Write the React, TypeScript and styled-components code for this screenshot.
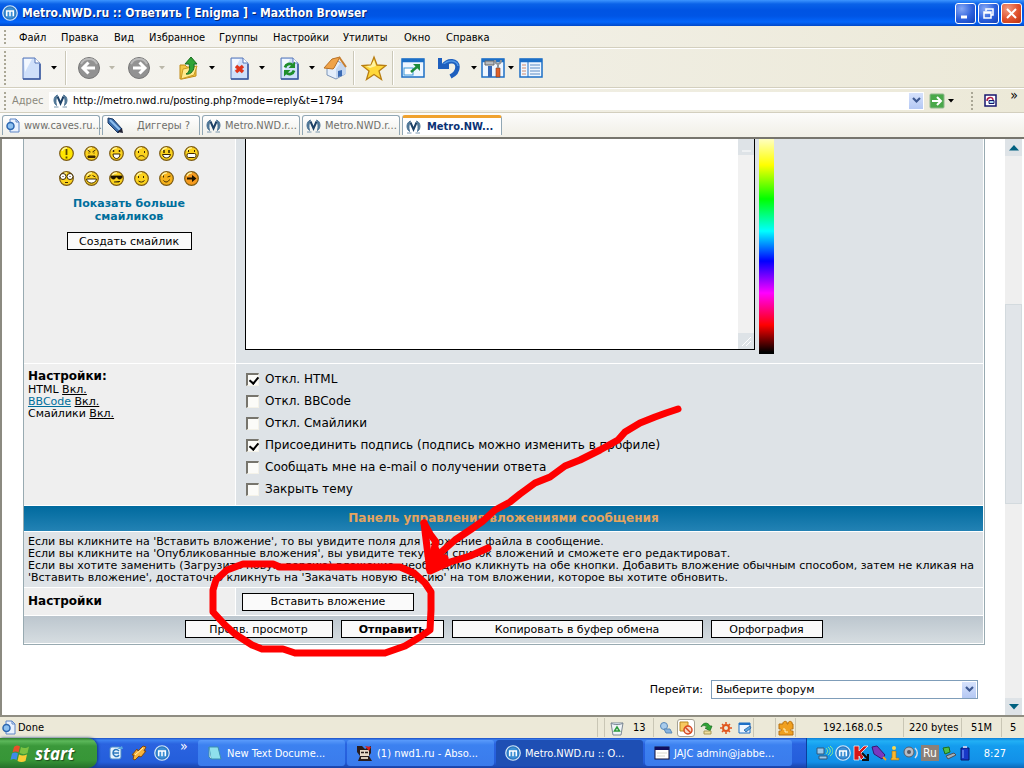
import React from "react";
import styled, { createGlobalStyle, css } from "styled-components";

const ui = `"DejaVu Sans Condensed", "DejaVu Sans", sans-serif`;
const page = `"DejaVu Sans", sans-serif`;

const Global = createGlobalStyle`
  * { box-sizing: border-box; }
  body { margin: 0; background: #fff; color: #000; font-family: ${ui}; font-size: 11px; }
  button, input, select, textarea { font: inherit; color: inherit; margin: 0; padding: 0; border: 0; background: none; }
  svg { display: block; flex: none; }
`;

const Screen = styled.div`
  display: flex;
  flex-direction: column;
  height: 100vh;
  overflow: hidden;
`;

/* ---------- window chrome ---------- */
const TitleBar = styled.header`
  display: flex;
  align-items: center;
  gap: 4px;
  height: 26px;
  padding: 0 2px;
  flex: none;
  background: linear-gradient(#3d95ff 0, #0a62e8 4px, #0054e3 10px, #0055e5 16px, #0466fb 22px, #0148c8 26px);
`;
const Title = styled.h1`
  margin: 0;
  flex: 1;
  font: bold 12px ${ui};
  color: #fff;
  text-shadow: 1px 1px #0a246a;
  white-space: nowrap;
`;
const WindowButton = styled.button<{ $close?: boolean }>`
  display: grid;
  place-items: center;
  width: 21px;
  height: 21px;
  margin-left: -2px;
  border: 1px solid #fff;
  border-radius: 3px;
  background: ${(p) =>
    p.$close
      ? "radial-gradient(circle at 30% 25%, #f09a80, #e0512c 55%, #b83210)"
      : "radial-gradient(circle at 30% 25%, #86a8f5, #2c60dc 55%, #1241b8)"};
`;
const MenuBar = styled.nav`
  display: flex;
  align-items: center;
  height: 22px;
  flex: none;
  padding-left: 4px;
  background: linear-gradient(90deg, #f7f6f3, #ece9d8);
  border-bottom: 1px solid #d3cfbe;
`;
const MenuItems = styled.div`
  display: flex;
  padding: 2px 0 0 13px;
`;
const MenuItem = styled.button<{ $w: number }>`
  width: ${(p) => p.$w}px;
  text-align: left;
  white-space: nowrap;
`;
const Grip = styled.span<{ $h: number }>`
  flex: none;
  width: 2px;
  height: ${(p) => p.$h}px;
  background: repeating-linear-gradient(#aaa796 0 2px, transparent 2px 4px);
`;
const ToolBar = styled.div`
  display: flex;
  align-items: center;
  height: 40px;
  flex: none;
  padding-left: 4px;
  border-top: 1px solid #fff;
  border-bottom: 1px solid #d3cfbe;
  background: linear-gradient(90deg, #f5f4f0, #ece9d8);
`;
const Tools0 = styled.div`
  display: flex;
  align-items: center;
  padding-left: 8px;
`;
const ToolButton = styled.button<{ $w?: number }>`
  display: grid;
  place-items: center;
  flex: none;
  width: ${(p) => p.$w ?? 34}px;
  height: 34px;
`;
const DropButton = styled.button<{ $w: number; $off?: boolean }>`
  display: flex;
  align-items: center;
  flex: none;
  width: ${(p) => p.$w}px;
  height: 34px;
  padding-left: 3px;
  color: ${(p) => (p.$off ? "#bbb8aa" : "#000")};
`;
const Rule = styled.span<{ $w: number }>`
  flex: none;
  width: ${(p) => p.$w}px;
  height: 34px;
  background: linear-gradient(90deg, transparent 1px, #cbc8b8 1px 2px, #fff 2px 3px, transparent 3px);
`;
const AddressBar = styled.div`
  display: flex;
  align-items: center;
  height: 25px;
  flex: none;
  padding: 0 3px 0 4px;
  border-top: 1px solid #fff;
  border-bottom: 1px solid #d3cfbe;
  background: linear-gradient(90deg, #f5f4f0, #ece9d8);
`;
const AddressLabel = styled.label`
  width: 43px;
  padding-left: 6px;
  color: #8a887c;
`;
const AddressField = styled.div`
  display: flex;
  align-items: center;
  flex: 1;
  height: 18px;
  margin-right: 5px;
  padding: 0 1px 0 4px;
  gap: 5px;
  background: #fff;
`;
const AddressInput = styled.input`
  flex: 1;
  min-width: 0;
  outline: 0;
`;
const Chevron = styled.button`
  display: grid;
  place-items: center;
  flex: none;
  width: 14px;
  height: 16px;
  background: linear-gradient(#d6e2fc, #b4c8f4);
`;
const Chevrons = styled.button`
  align-self: flex-start;
  width: 14px;
  font-size: 14px;
  line-height: 12px;
`;
const TabStrip = styled.div`
  display: flex;
  align-items: flex-end;
  gap: 2px;
  height: 26px;
  flex: none;
  padding: 0 2px 2px;
  background: linear-gradient(#fcfcfb, #f1efe6);
  border-bottom: 2px solid #77756d;
`;
const Tab = styled.button<{ $on?: boolean }>`
  display: flex;
  align-items: center;
  gap: 4px;
  width: 98px;
  height: 20px;
  padding: 0 0 0 3px;
  color: #6f6f6b;
  white-space: nowrap;
  border: 1px solid #91a7b4;
  border-bottom: 0;
  border-radius: 3px 3px 0 0;
  background: linear-gradient(#fff, #f0f0ea);
  ${(p) =>
    p.$on &&
    css`
      width: 100px;
      color: #0b3275;
      font-weight: bold;
      background: #fff;
      border-top: 3px solid #f0a22e;
      gap: 6px;
    `}
`;
const TabLabel = styled.span<{ $center?: boolean }>`
  flex: ${(p) => (p.$center ? 1 : "none")};
  text-align: center;
`;

/* ---------- page ---------- */
const Viewport = styled.main`
  position: relative;
  display: flex;
  flex: 1;
  min-height: 0;
  overflow: hidden;
  border-left: 2px solid #8b8a80;
  background: #fff;
`;
const Body = styled.div`
  flex: 1;
  min-width: 0;
  padding: 0 20px 0 21px;
  font-family: ${page};
`;
const Form = styled.form`
  display: grid;
  grid-template-columns: 211px 1fr;
  gap: 1px;
  border: solid #98aab1;
  border-width: 0 1px 1px;
  padding-bottom: 1px;
  padding-right: 1px;
`;
const LabelCell = styled.section`
  background: #efefef;
  padding: 4px;
`;
const FieldCell = styled.section`
  background: #dee3e7;
  padding: 0 8px 0 9px;
`;
const SmileyCell = styled(LabelCell)`
  display: flex;
  flex-direction: column;
  align-items: center;
  height: 224px;
  padding: 7px 5px 4px 4px;
`;
const SmileyGrid = styled.div`
  display: grid;
  grid-template-columns: repeat(6, 15px);
  gap: 10px;
  margin-bottom: 11px;
`;
const SmileyButton = styled.button`
  width: 15px;
  height: 15px;
`;
const MoreLink = styled.a`
  width: 130px;
  margin-bottom: 9px;
  font-size: 11px;
  font-weight: bold;
  line-height: 13px;
  text-align: center;
  text-decoration: none;
  color: #006e9c;
`;
const FormButton = styled.button<{ $w: number; $bold?: boolean }>`
  width: ${(p) => p.$w}px;
  height: 18px;
  border: 1px solid #000;
  background: #fafafa;
  font: ${(p) => (p.$bold ? "bold" : "normal")} 11px ${page};
  white-space: nowrap;
`;
const EditorCell = styled(FieldCell)`
  display: flex;
  align-items: flex-start;
  gap: 4px;
`;
const Editor = styled.div`
  display: flex;
  width: 510px;
  height: 211px;
  border: 1px solid #000;
  border-top: 0;
  background: #fff;
`;
const MessageBox = styled.textarea`
  flex: 1;
  resize: none;
  outline: 0;
  padding: 2px;
`;
const EditorScroll = styled.div`
  display: flex;
  flex-direction: column;
  justify-content: space-between;
  width: 16px;
  background: #f1f1f1;
`;
const ScrollStub = styled.span`
  display: grid;
  place-items: end;
  height: 16px;
  padding: 3px;
  background: #dee3e7;
`;
const ColourBar = styled.div`
  width: 15px;
  height: 215px;
  background: linear-gradient(#ffffc0, #ff0 26px, #0f0 60px, #0ff 92px, #00f 122px, #f0f 154px, #f00 186px, #000 213px);
`;
const SettingsCell = styled(LabelCell)`
  height: 141px;
  font-size: 11px;
  line-height: 12px;
`;
const Heading = styled.h2`
  margin: 0;
  font: bold 12px/16px ${page};
`;
const Line = styled.p`
  margin: 0;
`;
const Link = styled.a<{ $blue?: boolean }>`
  color: ${(p) => (p.$blue ? "#006e9c" : "#000")};
`;
const Options = styled(FieldCell)`
  display: flex;
  flex-direction: column;
  padding-top: 4px;
`;
const Option = styled.label`
  display: flex;
  align-items: center;
  gap: 6px;
  height: 22px;
  padding-left: 1px;
  font-size: 12px;
  white-space: nowrap;
`;
const Check = styled.input`
  appearance: none;
  flex: none;
  width: 13px;
  height: 13px;
  background: #fbfbf8;
  border: solid;
  border-width: 2px 1px 1px 2px;
  border-color: #77756d #f4f2e8 #f4f2e8 #77756d;
  &:checked::after {
    content: "";
    display: block;
    width: 4px;
    height: 7px;
    margin: 0 0 0 3px;
    border: solid #000;
    border-width: 0 2px 2px 0;
    transform: rotate(40deg);
  }
`;
const Banner = styled.h2`
  grid-column: 1 / -1;
  margin: 0;
  height: 25px;
  font: bold 12px/25px ${page};
  text-align: center;
  color: #e5a45e;
  background: linear-gradient(#006a9e, #2382b4);
`;
const Notes = styled.div`
  grid-column: 1 / -1;
  height: 55px;
  padding: 4px 4px 0;
  font-size: 11px;
  line-height: 12px;
  background: #dee3e7;
  white-space: nowrap;
`;
const RowLabel = styled(LabelCell)`
  height: 27px;
  padding: 5px 4px;
`;
const RowField = styled(FieldCell)`
  display: flex;
  align-items: center;
  padding-left: 6px;
`;
const Actions = styled.div`
  grid-column: 1 / -1;
  display: flex;
  justify-content: center;
  gap: 8px;
  height: 27px;
  padding-top: 4px;
  background: linear-gradient(#bcc6ce, #d6dde1);
`;
const Jump = styled.div`
  display: flex;
  align-items: center;
  justify-content: flex-end;
  gap: 8px;
  margin: 35px 7px 0 0;
  font-size: 11px;
`;
const SelectBox = styled.div`
  display: flex;
  align-items: center;
  width: 267px;
  height: 19px;
  padding: 1px;
  border: 1px solid #7f9db9;
  background: #fff;
`;
const Select = styled.select`
  appearance: none;
  flex: 1;
  padding-left: 3px;
  outline: 0;
`;
const PageScroll = styled.div`
  display: flex;
  flex-direction: column;
  width: 17px;
  margin-right: 2px;
  background: #efefef;
`;
const ScrollButton = styled.button`
  display: grid;
  place-items: center;
  height: 17px;
  flex: none;
  background: #dee3e7;
`;
const Thumb = styled.div`
  flex: 200;
  background: #e1e5e9;
  border: 1px solid #d3dade;
`;
const Gap = styled.span<{ $f: number }>`
  flex: ${(p) => p.$f};
`;
const Scribble = styled.svg`
  position: absolute;
  top: 0;
  left: -2px;
  pointer-events: none;
`;

/* ---------- status bar and task bar ---------- */
const StatusBar = styled.footer`
  display: flex;
  align-items: center;
  height: 23px;
  flex: none;
  padding-left: 2px;
  border-top: 2px solid #8f8d82;
  background: #ece9d8;
  white-space: nowrap;
`;
const StatusText = styled.span`
  flex: 1;
  padding-left: 2px;
`;
const Panel = styled.span<{ $w: number; $pad?: number }>`
  display: flex;
  align-items: center;
  gap: 4px;
  flex: none;
  width: ${(p) => p.$w}px;
  height: 19px;
  padding-left: ${(p) => p.$pad ?? 4}px;
  border-left: 1px solid #c9c6b5;
`;
const TrashPanel = styled(Panel)`
  gap: 8px;
`;
const StatusButton = styled.button<{ $on?: boolean }>`
  display: grid;
  place-items: center;
  width: 16px;
  height: 18px;
  ${(p) =>
    p.$on &&
    css`
      width: 18px;
      border: 1px solid #a5a294;
      border-radius: 3px;
      background: #fff;
    `}
`;
const TaskBar = styled.footer`
  display: flex;
  align-items: stretch;
  height: 30px;
  flex: none;
  color: #fff;
  background: linear-gradient(#1d4fc4 0, #3d83f2 2px, #2a63e0 6px, #245edb 24px, #1941a5 30px);
`;
const Start = styled.button`
  display: flex;
  align-items: center;
  gap: 5px;
  width: 97px;
  padding-left: 10px;
  font: italic bold 17px "Open Sans", sans-serif;
  text-shadow: 1px 1px 1px #1e4d1c;
  border-radius: 0 9px 9px 0;
  background: linear-gradient(#2d7d2d 0, #5cb85a 3px, #3a983a 8px, #379637 22px, #25702a 30px);
  box-shadow: 1px 0 3px #12357e;
`;
const QuickLaunch = styled.div`
  display: flex;
  align-items: center;
  gap: 7px;
  width: 101px;
  padding-left: 11px;
`;
const More = styled.button`
  align-self: flex-start;
  padding: 0 0 0 3px;
  font-size: 14px;
`;
const Tasks = styled.div`
  display: flex;
  align-items: center;
  flex: 1;
  gap: 2px;
`;
const Task = styled.button<{ $on?: boolean }>`
  display: flex;
  align-items: center;
  gap: 4px;
  width: 147px;
  height: 26px;
  padding-left: 9px;
  border-radius: 3px;
  white-space: nowrap;
  background: ${(p) => (p.$on ? "#1e4fb4" : "linear-gradient(#5a9bfb, #3c81f0 5px, #3a7bec)")};
`;
const Tray = styled.div`
  display: flex;
  align-items: center;
  gap: 2px;
  width: 218px;
  padding-left: 9px;
  border-left: 1px solid #0b3f9c;
  background: linear-gradient(#0d7fd8 0, #22b0f5 3px, #149cee 8px, #1290e8 24px, #0c68b8 30px);
`;
const Lang = styled.span`
  padding: 1px 2px;
  font-size: 12px;
  background: #8a8078;
`;
const Clock = styled.time`
  margin-left: 11px;
`;

/* ---------- drawings ---------- */
const Svg = ({ s = 16, w, h, children }: { s?: number; w?: number; h?: number; children: React.ReactNode }) => (
  <svg width={w ?? s} height={h ?? s} viewBox={`0 0 ${w ?? s} ${h ?? s}`} aria-hidden="true">
    {children}
  </svg>
);
const Tri = () => (
  <Svg w={6} h={4}>
    <path d="M0 0h6L3 3.500z" fill="currentColor" />
  </Svg>
);
const Down = () => (
  <Svg w={9} h={7}>
    <path d="M1 1l3.500 3.500L8 1" fill="none" stroke="#3f5a92" strokeWidth="2.200" />
  </Svg>
);
const MaxthonIcon = ({ s = 17 }: { s?: number }) => (
  <svg width={s} height={s} viewBox="0 0 17 17" aria-hidden="true">
    <circle cx="8.500" cy="8.500" r="7.700" fill="#2d78c0" stroke="#d4e8f8" strokeWidth="1.300" />
    <circle cx="8.500" cy="8.500" r="5.800" fill="#3b8fd4" />
    <path d="M5 12V6.500h7V12M8.500 6.500V12" fill="none" stroke="#fff" strokeWidth="1.600" />
  </svg>
);
const MetroIcon = () => (
  <Svg w={15} h={14}>
    <path d="M4.500 1C0 2.500 0 9 3.500 11.500 2.500 8 2.800 4 4.500 1zM10.500 1C15 2.500 15 9 11.500 11.500 12.500 8 12.200 4 10.500 1z" fill="#4f7696" stroke="#4f7696" />
    <path d="M4.500 2.500L7.500 9.500 10.500 2.500" fill="none" stroke="#1c4066" strokeWidth="2" />
    <path d="M1 13h4.500M9.500 13H14" stroke="#7b97ae" />
  </Svg>
);
const PageBase = () => (
  <>
    <path d="M1 1h12l5 5v16H1z" fill="#cfe0fa" stroke="#5676b8" />
    <path d="M2 2h8L3 15z" fill="#f3f8ff" />
    <path d="M13 1v5h5" fill="#fff" stroke="#5676b8" />
    <path d="M1 22h17V7" fill="none" stroke="#3d5ba0" strokeWidth="1.500" />
  </>
);
const NewPage = () => (
  <Svg w={19} h={23}>
    <PageBase />
  </Svg>
);
const StopPage = () => (
  <Svg w={19} h={23}>
    <PageBase />
    <path d="M6 9l7 6M13 9l-7 6" stroke="#e0361c" strokeWidth="3.500" />
  </Svg>
);
const RefreshPage = () => (
  <Svg w={19} h={23}>
    <PageBase />
    <path d="M5 10.500c1-3.500 5-4.500 7.500-2.500M14 13.500c-1 3.500-5 4.500-7.500 2.500" fill="none" stroke="#1f8e2c" strokeWidth="2.800" />
    <path d="M15 4.500v6.500H8.500zM4 19.500V13h6.500z" fill="#1f8e2c" />
  </Svg>
);
const Round = ({ left }: { left?: boolean }) => (
  <Svg s={24}>
    <circle cx="12" cy="12" r="10.500" fill="#929292" stroke="#777" />
    <path d="M4 8a9 9 0 0 1 16 0" fill="none" stroke="#b9b9b9" strokeWidth="2" />
    <path
      d={left ? "M18 12H7M11.500 6.500L6 12l5.500 5.500" : "M6 12h11M12.500 6.500L18 12l-5.500 5.500"}
      fill="none"
      stroke="#fff"
      strokeWidth="3"
    />
  </Svg>
);
const Folder = () => (
  <Svg s={24}>
    <path d="M3 9h5l2 2h9v9l-14 3H3z" fill="#f2c744" stroke="#c08a16" />
    <path d="M6 13l14-3-3 9-13 4z" fill="#ffe98b" stroke="#c99a24" />
    <path d="M9 18c4-2 4-6 3-10H8l6-7 6 7h-3c1 6-3 11-8 10z" fill="#2fa436" stroke="#176b1e" />
  </Svg>
);
const Home = () => (
  <Svg s={24}>
    <path d="M4 11v8l9 4 9-5v-8l-7-5z" fill="#e4eefb" stroke="#7d95b8" />
    <path d="M13 22v-9l5-7 5 6v6z" fill="#c3d6f0" />
    <path d="M1 12L9 3l8-2-6 11-1 1z" fill="#f0a348" stroke="#b87125" />
    <path d="M16 1l7 10" stroke="#c77f30" strokeWidth="2" />
    <path d="M15 15l4-1v6l-4 1z" fill="#3b6bb4" />
  </Svg>
);
const Star = () => (
  <Svg s={26}>
    <path d="M13 2l3 8 9 .5-7 5.500 2.500 8.500L13 19.500 5.500 24.500 8 16 1 10.500l9-.5z" fill="#ffd83a" stroke="#b87e12" strokeWidth="1.300" />
    <path d="M13 5l2 6-6 2-4-2 5-.5z" fill="#fff3a0" />
  </Svg>
);
const Win = ({ children }: { children?: React.ReactNode }) => (
  <Svg w={24} h={20}>
    <rect x="1" y="1" width="22" height="18" fill="#eef6ff" stroke="#1c6fc6" strokeWidth="1.500" />
    <path d="M1 2.500h22" stroke="#1c6fc6" strokeWidth="3.500" />
    {children}
  </Svg>
);
const FullScreen = () => (
  <Win>
    <rect x="3" y="10" width="9" height="7" fill="#fff" stroke="#3a97d8" />
    <path d="M10 14l7-6" stroke="#1d8c3a" strokeWidth="2.500" />
    <path d="M12 6h7v7z" fill="#1d8c3a" />
  </Win>
);
const Undo = () => (
  <Svg s={24}>
    <path d="M6 10c5-7 14.500-6 14.500 1 0 4-3 7.500-7 9.500" fill="none" stroke="#1e5fbe" strokeWidth="4.500" />
    <path d="M6 9c5-6 14-5 15 1" fill="none" stroke="#4f95e6" strokeWidth="1.500" />
    <path d="M1 2h4v6h7v5H1z" fill="#1e5fbe" />
  </Svg>
);
const Tools = () => (
  <Win>
    <path d="M7 8h4v11H7z" fill="#3568b8" />
    <path d="M4 3h9v4H4z" fill="#b6babf" stroke="#666" />
    <path d="M15 10h4v9h-4z" fill="#e0602a" stroke="#7c3a1e" strokeWidth=".6" />
    <path d="M17 10V6M14 2c0 5 6 5 6 0" fill="none" stroke="#8e9399" strokeWidth="2" />
  </Win>
);
const SidePanel = () => (
  <Win>
    <path d="M9 4v15" stroke="#1c6fc6" />
    <path d="M3 7h4M3 10h4M3 13h4M3 16h4" stroke="#d08a6c" />
    <path d="M11 7h10M11 10h10M11 13h10M11 16h10" stroke="#5c8cc4" />
  </Win>
);
const DocIcon = () => (
  <Svg w={14} h={15}>
    <path d="M4 1h6l3 3v10H4z" fill="#eaf2fe" stroke="#5f86c6" />
    <circle cx="4.500" cy="8" r="3.500" fill="#8cc0f0" stroke="#2c66b0" strokeWidth="1.500" />
    <path d="M10 1v3h3" fill="none" stroke="#5f86c6" />
  </Svg>
);
const Pencil = () => (
  <Svg w={18} h={17}>
    <path d="M2 1l5 1 9 10-4 4L2 6z" fill="#3c6fae" stroke="#1c3963" />
    <path d="M4 3l10 10" stroke="#8fc0ef" strokeWidth="2" />
    <path d="M11 15l5-4 1 5z" fill="#223" />
  </Svg>
);
const Go = () => (
  <Svg s={16}>
    <rect x="1" y="1" width="14" height="14" rx="1" fill="#4aa84a" stroke="#8fb88c" />
    <path d="M3 8h8M8 4l4 4-4 4" fill="none" stroke="#fff" strokeWidth="2" />
  </Svg>
);
const Snap = () => (
  <Svg s={13}>
    <rect x="1" y="1" width="11" height="11" fill="#fff" stroke="#16166e" strokeWidth="1.500" />
    <path d="M3 7c0-4 6-5 6-1" fill="none" stroke="#b0204a" strokeWidth="1.500" />
    <path d="M5 6.500h5v3H5z" fill="#a8d8f0" stroke="#16166e" />
  </Svg>
);

const faces: { name: string; fill?: string; art: React.ReactNode }[] = [
  { name: "Внимание", fill: "#ffe600", art: <path d="M7.500 3v6M7.500 10.500v2" stroke="#5c4a00" strokeWidth="1.800" /> },
  { name: "Злой", art: <path d="M3.500 4l3 2M11.500 4l-3 2M4.500 7h1M9.500 7h1M4 11.500V10h7v1.500z" stroke="#3c2800" fill="#3c2800" /> },
  {
    name: "Шок",
    art: (
      <>
        <path d="M4.500 4v2M10.500 4v2" stroke="#3c2800" strokeWidth="1.500" />
        <path d="M4 8h7c0 6-7 6-7 0z" fill="#fff" stroke="#3c2800" />
      </>
    ),
  },
  { name: "Грусть", art: <path d="M4.500 5v2M10.500 5v2M4 11.500c2-2.500 5-2.500 7 0" stroke="#3c2800" fill="none" /> },
  {
    name: "Радость",
    art: (
      <>
        <path d="M5 4v3M10 4v3" stroke="#3c2800" strokeWidth="1.500" />
        <path d="M3.500 8.500h8c-1 4.500-7 4.500-8 0z" fill="#fff" stroke="#3c2800" />
      </>
    ),
  },
  {
    name: "Зелёный",
    art: (
      <>
        <path d="M4.500 4v2M10.500 4v2" stroke="#3c2800" />
        <rect x="3" y="7.500" width="9" height="4" rx="1.500" fill="#fff" stroke="#3c2800" />
      </>
    ),
  },
  {
    name: "Глазки",
    art: (
      <>
        <circle cx="4" cy="5.500" r="3" fill="#fff" stroke="#3c2800" />
        <circle cx="11" cy="5.500" r="3" fill="#fff" stroke="#3c2800" />
        <path d="M4 5v1M11 5v1M6 11.500h3" stroke="#3c2800" />
      </>
    ),
  },
  {
    name: "Смех",
    art: (
      <>
        <path d="M3.500 6l3-1.500M11.500 6l-3-1.500" stroke="#3c2800" />
        <path d="M2.500 8h10c-1 5.500-9 5.500-10 0z" fill="#fff" stroke="#3c2800" />
      </>
    ),
  },
  { name: "Крутой", art: <path d="M2 5h11v1.500l-1.500 1.500h-2L8 6H7L5.500 8h-2L2 6.500zM5 11h5l1-1" fill="#1c1200" stroke="#1c1200" strokeWidth=".8" /> },
  { name: "Улыбка", art: <path d="M4.500 5v2M9.500 5v2M4.500 10c2 1.500 4 1.500 6-.5" stroke="#3c2800" fill="none" /> },
  { name: "Подмигивание", fill: "#f6b21c", art: <path d="M4.500 4.500v2M8.500 6l3-1M4.500 9.500c2 2.500 5 1.500 6-1" stroke="#3c2800" fill="none" /> },
  { name: "Стрелка", fill: "#f59a1e", art: <path d="M3 6.500h5V4l4.500 3.500L8 11V8.500H3z" fill="#1c1200" /> },
];
const Face = ({ fill = "#fbd21e", children }: { fill?: string; children: React.ReactNode }) => (
  <Svg s={15}>
    <circle cx="7.500" cy="7.500" r="6.800" fill={fill} stroke="#7c5a10" strokeWidth="1.200" />
    <path d="M3 5a5 5 0 0 1 5-3" fill="none" stroke="#fff6a0" strokeWidth="1.200" />
    {children}
  </Svg>
);

const Flag = () => (
  <Svg w={20} h={20}>
    <path d="M4 4c2-2 4-2 6-.5L8.500 9.500c-2-1.500-4-1.500-6 0z" fill="#e8502a" />
    <path d="M11 4c2.500 1.500 5 1.500 8-.5L17.500 10c-2.500 1.500-5 1.500-8 0z" fill="#7cc242" />
    <path d="M2 10.500c2-1.500 4-1.500 6 0L6.500 17c-2-1.500-4-1.500-6 0z" fill="#3f8be8" />
    <path d="M9 11.500c2.500 1.200 5 1.200 8 0L15.500 18c-2.500 1.200-5.500 1.200-8 0z" fill="#f8cc34" />
  </Svg>
);
const Bolt = () => (
  <Svg s={16}>
    <path d="M1 10l5-6 1 2 5-5 3 1-2 4h2l-5 6-2-1-4 4-2-1 1-4z" fill="#f8b43c" stroke="#7c4412" />
    <path d="M4 10l8-7" stroke="#fff0b8" />
  </Svg>
);
const Outlook = () => (
  <Svg s={16}>
    <rect x="2" y="2" width="11" height="12" rx="2" fill="#e5f3fd" stroke="#4c8cc8" />
    <path d="M11 6c-3-3-6-1-6 2s4 5 6 2M5 8h6" fill="none" stroke="#2b78bc" strokeWidth="1.500" />
    <path d="M9 4l5-3 1 3" fill="#58a8e0" />
  </Svg>
);
const Notepad = () => (
  <Svg s={16}>
    <path d="M2 2h9l3 12H4z" fill="#8fe0ec" stroke="#3a8fae" />
    <path d="M2 2v10l2 2" fill="#d8f5fa" stroke="#3a8fae" />
  </Svg>
);
const Miranda = () => (
  <Svg s={17}>
    <path d="M1 1h5l3 3 6-3v7l-2 3 3 5H2l2-5-3-4z" fill="#2a1c1c" />
    <path d="M4 5h9v6H4z" fill="#e8d8c8" />
    <path d="M9 1l6 1-2 4z" fill="#d82020" />
    <path d="M5 7.500h3M9 7.500h3" stroke="#2a1c1c" strokeWidth="1.500" />
    <path d="M5 13h7" stroke="#d8c8b8" strokeWidth="2" />
  </Svg>
);
const Jajc = () => (
  <Svg s={16}>
    <rect x="1" y="2" width="14" height="12" fill="#fff" stroke="#101038" />
    <path d="M1 3.500h14" stroke="#101060" strokeWidth="3" />
    <path d="M3 8h10M3 11h8" stroke="#d8d8cc" />
  </Svg>
);
const Trash = () => (
  <Svg s={16}>
    <path d="M2 3h12l-2 12H4z" fill="#f0f4f8" stroke="#7c8894" />
    <path d="M2 3c2 2 10 2 12 0" fill="#c8d4e0" stroke="#7c8894" />
    <path d="M5.500 11L8 7l2.500 4z" fill="none" stroke="#2c9c3c" strokeWidth="1.500" />
  </Svg>
);
const Blob = () => (
  <Svg w={14} h={14}>
    <circle cx="5" cy="5" r="3.500" fill="#a8ccec" stroke="#5888b8" />
    <path d="M5 8l6 0 2 4H7z" fill="#88b4e0" stroke="#5888b8" />
  </Svg>
);
const Block = () => (
  <Svg w={14} h={14}>
    <path d="M1 1h8v9H1z" fill="#f8c860" stroke="#b88820" />
    <circle cx="9" cy="9" r="4" fill="#f8d8c8" stroke="#d84820" strokeWidth="1.500" />
    <path d="M6 6l6 6" stroke="#d84820" strokeWidth="1.500" />
  </Svg>
);
const Leaf = () => (
  <Svg w={14} h={14}>
    <path d="M1 6c2-5 7-5 9-1h2l-2 5-5-3h2C6 4 3 4 1 6z" fill="#2fa436" stroke="#176b1e" strokeWidth=".7" />
    <path d="M4 10h7v3H4z" fill="#f0e0a0" stroke="#a89858" />
  </Svg>
);
const Sun = () => (
  <Svg w={14} h={14}>
    <circle cx="7" cy="7" r="3" fill="none" stroke="#e0541c" strokeWidth="2" />
    <path d="M7 1v2M7 11v2M1 7h2M11 7h2M3 3l1.500 1.500M9.500 9.500L11 11M11 3L9.500 4.500M4.500 9.500L3 11" stroke="#e0541c" strokeWidth="1.500" />
  </Svg>
);
const Edit = () => (
  <Svg w={14} h={14}>
    <path d="M1 2h11v10H1z" fill="#eef6ff" stroke="#1c6fc6" />
    <path d="M1 3h11" stroke="#1c6fc6" strokeWidth="2" />
    <path d="M6 9l6-4 1 2-5 4z" fill="#58a8e0" stroke="#1c4f96" strokeWidth=".7" />
  </Svg>
);
const Puzzle = () => (
  <Svg s={16}>
    <path d="M1 4h4c-1-3 5-4 4 0h1c0-4 5-3 4 0h1v5c-3-1-3 3 0 2v4H1v-4c3 1 3-3 0-2z" fill="#f0a020" stroke="#b87010" />
    <path d="M5 9h2v3h3" stroke="#fff0b8" fill="none" />
  </Svg>
);
const Net = () => (
  <Svg w={17} h={16}>
    <path d="M1 3h7v6H1zM3 11h8v3H3z" fill="#9cc8e8" stroke="#30587c" />
    <path d="M10 3c2 2 2 4 0 6M12 2c3 2 3 6 0 8M14 1c4 3 4 7 0 10" fill="none" stroke="#8cf08c" />
  </Svg>
);
const Kasper = () => (
  <Svg s={16}>
    <path d="M1 1h5v5l5-5h4L8 8l3 4-3 3-2-4v4H1z" fill="#d81818" stroke="#fff" strokeWidth=".7" />
    <path d="M9 8l6 6M15 9v6H9" fill="none" stroke="#101010" strokeWidth="2" />
  </Svg>
);
const Pen = () => (
  <Svg s={16}>
    <path d="M1 2l5-1 8 9-3 4-8-5z" fill="#7838c0" stroke="#381870" />
    <path d="M12 12l3 3" stroke="#f0a020" strokeWidth="2" />
  </Svg>
);
const Info = () => (
  <Svg w={12} h={16}>
    <circle cx="5" cy="3" r="2" fill="#f8d850" />
    <path d="M3 6h4v7h3v2H2v-2h1z" fill="#f8b830" stroke="#a87010" strokeWidth=".6" />
  </Svg>
);
const Speaker = () => (
  <Svg s={16}>
    <circle cx="6" cy="7" r="5" fill="#b8bcc4" stroke="#585c68" />
    <circle cx="6" cy="7" r="2" fill="#585c68" />
    <path d="M12 3c3 3 3 7 0 10" fill="none" stroke="#d8dce4" strokeWidth="1.500" />
  </Svg>
);
const Usb = () => (
  <Svg s={16}>
    <path d="M2 3l6-1 1 5-5 2z" fill="#50c048" stroke="#1c6c1c" />
    <path d="M5 11l8-3 2 2-8 4z" fill="#a8b0b8" stroke="#485058" />
  </Svg>
);
const Battery = () => (
  <Svg w={12} h={16}>
    <path d="M2 3h8v12H2z" fill="#1838c8" stroke="#081868" />
    <path d="M4 1h4v2H4z" fill="#b8c8f0" />
    <path d="M4 5v8" stroke="#88a8ff" />
  </Svg>
);

const menu: [string, number][] = [
  ["Файл", 42], ["Правка", 53], ["Вид", 35], ["Избранное", 70], ["Группы", 54],
  ["Настройки", 70], ["Утилиты", 61], ["Окно", 42], ["Справка", 50],
];
const options: [string, boolean][] = [
  ["Откл. HTML", true],
  ["Откл. BBCode", false],
  ["Откл. Смайлики", false],
  ["Присоединить подпись (подпись можно изменить в профиле)", true],
  ["Сообщать мне на e-mail о получении ответа", false],
  ["Закрыть тему", false],
];

export default function App() {
  return (
    <Screen>
      <Global />
      <TitleBar>
        <MaxthonIcon s={16} />
        <Title>Metro.NWD.ru :: Ответить [ Enigma ] - Maxthon Browser</Title>
        <WindowButton aria-label="Свернуть">
          <Svg s={13}><path d="M2 10h6" stroke="#fff" strokeWidth="3" /></Svg>
        </WindowButton>
        <WindowButton aria-label="Восстановить">
          <Svg s={13}><path d="M4 4V2h7v6H9M2 5h7v6H2zM2 6h7" fill="none" stroke="#fff" strokeWidth="1.500" /></Svg>
        </WindowButton>
        <WindowButton $close aria-label="Закрыть">
          <Svg s={13}><path d="M2 2l9 9M11 2l-9 9" stroke="#fff" strokeWidth="2" /></Svg>
        </WindowButton>
      </TitleBar>
      <MenuBar>
        <Grip $h={14} />
        <MenuItems>
          {menu.map(([t, w]) => (
            <MenuItem key={t} $w={w}>{t}</MenuItem>
          ))}
        </MenuItems>
      </MenuBar>
      <ToolBar>
        <Grip $h={34} />
        <Tools0>
          <ToolButton aria-label="Новая"><NewPage /></ToolButton>
          <DropButton $w={16} aria-label="Список"><Tri /></DropButton>
          <Rule $w={8} />
          <ToolButton aria-label="Назад"><Round left /></ToolButton>
          <DropButton $w={16} $off aria-label="Список"><Tri /></DropButton>
          <ToolButton aria-label="Вперёд"><Round /></ToolButton>
          <DropButton $w={16} $off aria-label="Список"><Tri /></DropButton>
          <ToolButton aria-label="Вверх"><Folder /></ToolButton>
          <DropButton $w={16} aria-label="Список"><Tri /></DropButton>
          <ToolButton aria-label="Стоп"><StopPage /></ToolButton>
          <DropButton $w={16} aria-label="Список"><Tri /></DropButton>
          <ToolButton aria-label="Обновить"><RefreshPage /></ToolButton>
          <DropButton $w={12} aria-label="Список"><Tri /></DropButton>
          <ToolButton aria-label="Домой"><Home /></ToolButton>
          <Rule $w={5} />
          <ToolButton aria-label="Избранное"><Star /></ToolButton>
          <Rule $w={5} />
          <ToolButton aria-label="Полный экран"><FullScreen /></ToolButton>
          <ToolButton $w={38} aria-label="Отменить"><Undo /></ToolButton>
          <DropButton $w={13} aria-label="Список"><Tri /></DropButton>
          <ToolButton $w={24} aria-label="Инструменты"><Tools /></ToolButton>
          <DropButton $w={9} aria-label="Список"><Tri /></DropButton>
          <ToolButton aria-label="Панель"><SidePanel /></ToolButton>
        </Tools0>
      </ToolBar>
      <AddressBar>
        <Grip $h={18} />
        <AddressLabel htmlFor="address">Адрес</AddressLabel>
        <AddressField>
          <MetroIcon />
          <AddressInput id="address" defaultValue="http://metro.nwd.ru/posting.php?mode=reply&t=1794" />
          <Chevron aria-label="История"><Down /></Chevron>
        </AddressField>
        <Go />
        <DropButton $w={26} aria-label="Список"><Tri /></DropButton>
        <Grip $h={18} />
        <ToolButton aria-label="Снимок"><Snap /></ToolButton>
        <Chevrons aria-label="Ещё">»</Chevrons>
      </AddressBar>
      <TabStrip>
        <Tab><DocIcon /><TabLabel>www.caves.ru...</TabLabel></Tab>
        <Tab><Pencil /><TabLabel $center>Диггеры ?</TabLabel></Tab>
        <Tab><MetroIcon /><TabLabel>Metro.NWD.r...</TabLabel></Tab>
        <Tab><MetroIcon /><TabLabel>Metro.NWD.r...</TabLabel></Tab>
        <Tab $on><MetroIcon /><TabLabel>Metro.NW...</TabLabel></Tab>
      </TabStrip>

      <Viewport>
        <Body>
          <Form onSubmit={(e) => e.preventDefault()}>
            <SmileyCell>
              <SmileyGrid>
                {faces.map((f) => (
                  <SmileyButton type="button" key={f.name} aria-label={f.name}>
                    <Face fill={f.fill}>{f.art}</Face>
                  </SmileyButton>
                ))}
              </SmileyGrid>
              <MoreLink href="#smilies">Показать больше смайликов</MoreLink>
              <FormButton type="button" $w={125}>Создать смайлик</FormButton>
            </SmileyCell>
            <EditorCell>
              <Editor>
                <MessageBox aria-label="Сообщение" />
                <EditorScroll>
                  <ScrollStub><Svg w={9} h={2}><path d="M0 1h9" stroke="#fff" /></Svg></ScrollStub>
                  <ScrollStub><Svg w={9} h={9}><path d="M0 9l9-9M4 9l5-5" stroke="#fff" /></Svg></ScrollStub>
                </EditorScroll>
              </Editor>
              <ColourBar />
            </EditorCell>

            <SettingsCell>
              <Heading>Настройки:</Heading>
              <Line>HTML <Link href="#faq">Вкл.</Link></Line>
              <Line><Link $blue href="#bbcode">BBCode</Link> <Link href="#faq">Вкл.</Link></Line>
              <Line>Смайлики <Link href="#faq">Вкл.</Link></Line>
            </SettingsCell>
            <Options>
              {options.map(([t, on]) => (
                <Option key={t}>
                  <Check type="checkbox" defaultChecked={on} />
                  {t}
                </Option>
              ))}
            </Options>

            <Banner>Панель управления вложениями сообщения</Banner>
            <Notes>
              <Line>Если вы кликните на 'Вставить вложение', то вы увидите поля для вложение файла в сообщение.</Line>
              <Line>Если вы кликните на 'Опубликованные вложения', вы увидите текущий список вложений и сможете его редактироват.</Line>
              <Line>Если вы хотите заменить (Загрузить новую версию) вложение, необходимо кликнуть на обе кнопки. Добавить вложение обычным способом, затем не кликая на</Line>
              <Line>'Вставить вложение', достаточно кликнуть на 'Закачать новую версию' на том вложении, которое вы хотите обновить.</Line>
            </Notes>
            <RowLabel><Heading>Настройки</Heading></RowLabel>
            <RowField><FormButton type="button" $w={172}>Вставить вложение</FormButton></RowField>
            <Actions>
              <FormButton type="button" $w={148}>Предв. просмотр</FormButton>
              <FormButton type="submit" $w={103} $bold>Отправить</FormButton>
              <FormButton type="button" $w={251}>Копировать в буфер обмена</FormButton>
              <FormButton type="button" $w={112}>Орфография</FormButton>
            </Actions>
          </Form>
          <Jump>
            <label htmlFor="jump">Перейти:</label>
            <SelectBox>
              <Select id="jump"><option>Выберите форум</option></Select>
              <Chevron as="span"><Down /></Chevron>
            </SelectBox>
          </Jump>
        </Body>
        <PageScroll>
          <ScrollButton aria-label="Вверх"><Svg w={10} h={6}><path d="M0 5.500L5 0l5 5.500z" fill="#006080" /></Svg></ScrollButton>
          <Gap $f={149} />
          <Thumb />
          <Gap $f={196} />
          <ScrollButton aria-label="Вниз"><Svg w={10} h={6}><path d="M0 0h10L5 5.500z" fill="#006080" /></Svg></ScrollButton>
        </PageScroll>
        <Scribble width="700" height="540" viewBox="0 139 700 540" fill="none" stroke="#f00" strokeWidth="7" strokeLinecap="round" strokeLinejoin="round" aria-hidden="true">
          <path d="M280 567L273 564 243 564 227 570 216 580 213 590 213 612 225 625 235 634 252 645 262 649 283 649 295 653 385 653 405 646 420 637 430 630 431 610 431 592 425 583 414 573 400 567H279z" />
          <path d="M678 409L666 413 655 417 640 423 625 432 618 440 600 450 580 460 565 466 550 477 535 483 520 494 510 502 495 510 483 521 470 530 455 540 438 555" />
          <path d="M424 523L430 571 450 562 470 556 488 548" />
          <path d="M424 523L430 534 436 542 429 568 445 558" fill="#f00" />
        </Scribble>
      </Viewport>

      <StatusBar>
        <DocIcon />
        <StatusText>Done</StatusText>
        <Panel $w={7} />
        <TrashPanel $w={49}><Trash />13</TrashPanel>
        <Panel $w={100}>
          <StatusButton aria-label="Прокси"><Blob /></StatusButton>
          <StatusButton $on aria-label="Блокировка"><Block /></StatusButton>
          <StatusButton aria-label="Загрузки"><Leaf /></StatusButton>
          <StatusButton aria-label="Обновления"><Sun /></StatusButton>
          <StatusButton aria-label="Правка"><Edit /></StatusButton>
        </Panel>
        <Panel $w={22} />
        <Panel $w={20} $pad={2}><Puzzle /></Panel>
        <Panel $w={108} $pad={27}>192.168.0.5</Panel>
        <Panel $w={58} $pad={5}>220 bytes</Panel>
        <Panel $w={40} $pad={9}>51M</Panel>
        <Panel $w={23} $pad={8}>5</Panel>
      </StatusBar>
      <TaskBar>
        <Start><Flag />start</Start>
        <QuickLaunch>
          <Outlook />
          <Bolt />
          <MaxthonIcon s={16} />
          <More aria-label="Ещё">»</More>
        </QuickLaunch>
        <Tasks>
          <Task><Notepad />New Text Docume...</Task>
          <Task><Miranda />(1) nwd1.ru - Abso...</Task>
          <Task $on><MaxthonIcon s={16} />Metro.NWD.ru :: O...</Task>
          <Task><Jajc />JAJC admin@jabbe...</Task>
        </Tasks>
        <Tray>
          <Net /><MaxthonIcon s={16} /><Kasper /><Pen /><Info /><Speaker />
          <Lang>Ru</Lang>
          <Usb /><Battery />
          <Clock>8:27</Clock>
        </Tray>
      </TaskBar>
    </Screen>
  );
}
